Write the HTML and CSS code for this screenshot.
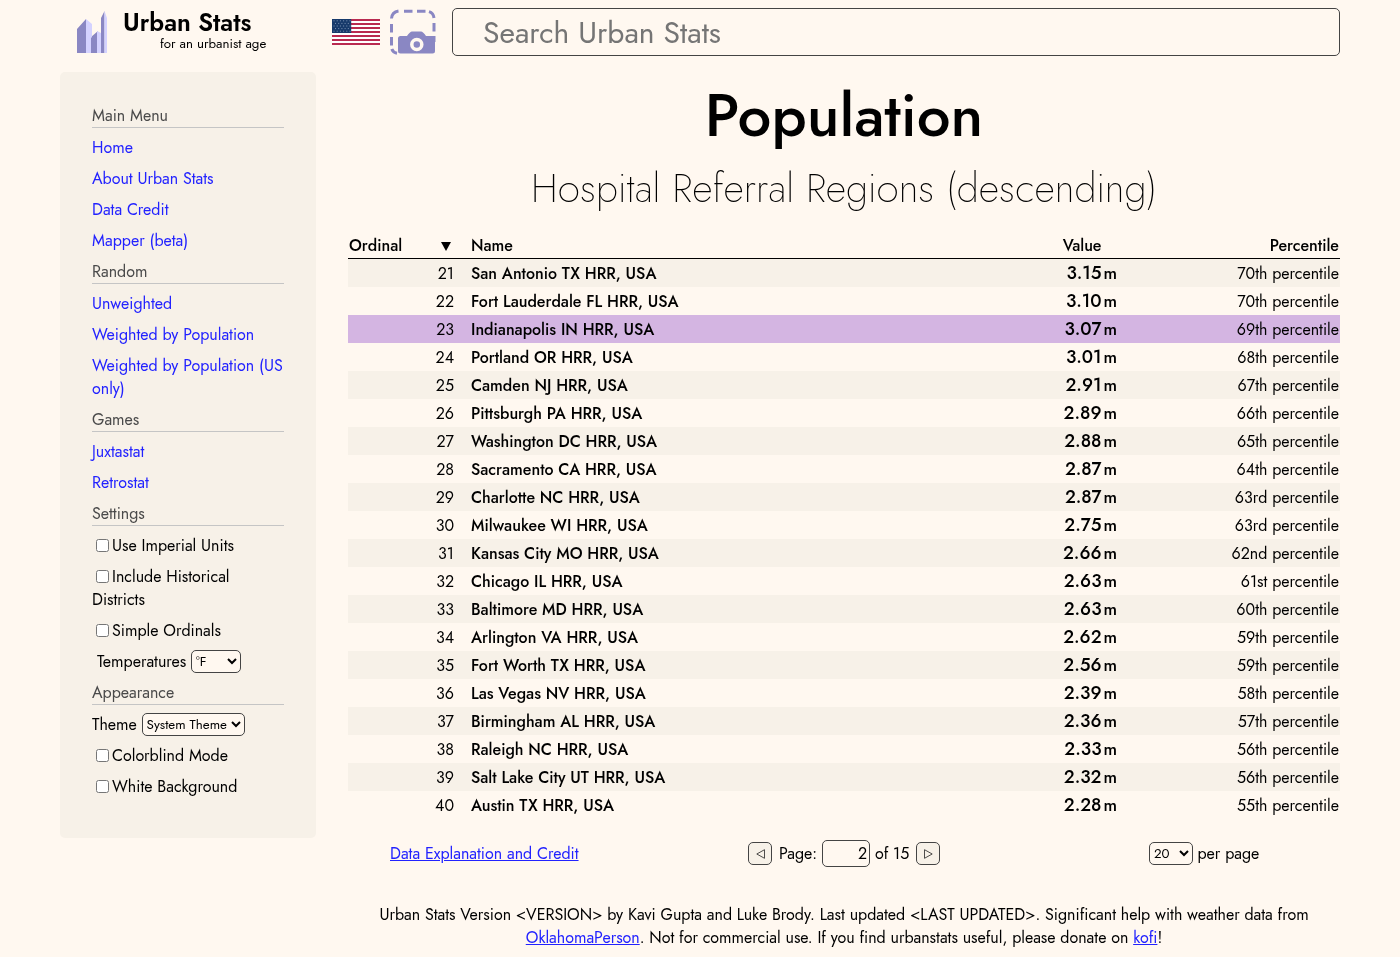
FILE: index.html
```html
<!DOCTYPE html>
<html lang="en">
<head>
<meta charset="utf-8">
<title>Population - Urban Stats</title>
<link rel="stylesheet" href="styles.css">
</head>
<body>
<header class="header">
  <a class="logo">
    <svg class="logo-mark" width="31" height="44" viewBox="0 0 31 44">
      <path fill="#8a87c3" d="M0 19 9 9v34H0zM14 27l7-6v22h-7zM24 8l3.500-7v42h-3.500z"/>
      <path fill="#d4d2ff" d="M9 9l6 5v13l-1 1v15H9zM20 21l4 2v20h-4zM27.500 1 30 8v35h-2.500z"/>
    </svg>
    <span class="logo-text"><span class="logo-name">Urban Stats</span><span class="logo-tag">for an urbanist age</span></span>
  </a>
  <svg class="flag" width="48" height="26" viewBox="0 0 48 26">
    <path fill="#fff" d="M0 0h48v26H0z"/>
    <path stroke="#b92a50" stroke-width="2" d="M0 1h48M0 5h48M0 9h48M0 13h48M0 17h48M0 21h48M0 25h48"/>
    <path fill="#173a6b" d="M0 0h19.200v14H0z"/>
    <path stroke="#7f95b5" stroke-width="1" stroke-dasharray="1 2.200" d="M1.500 1.800h17M3 4.400h15M1.500 7h17M3 9.600h15M1.500 12.200h17"/>
  </svg>
  <svg class="camera" width="46" height="46" viewBox="0 0 46 46">
    <g fill="none" stroke="#8a87c3" stroke-width="3">
      <path d="M1.500 9.500Q2 3 8.500 2M14 2.300h8.500M27 2.300h8.500M39 2.600Q43.500 4 44 9M1.500 15v8.500M1.500 28v8.500M44 14v8.500M44 27v6M1.800 40Q3 43.500 7 44.200"/>
    </g>
    <path fill="#8a87c3" d="M10.500 27H17q3-4.500 5-4.500h9q2 0 5 4.500h9v15q0 2.500-2.500 2.500H10.500q-2.500 0-2.500-2.500V29.500Q8 27 10.500 27z"/>
    <circle cx="26.800" cy="35.500" r="5" fill="none" stroke="#fff8f0" stroke-width="3.500"/>
  </svg>
  <input class="search" placeholder="Search Urban Stats">
</header>
<div class="page">
  <nav class="sidebar">
    <div class="side-title">Main Menu</div>
    <a class="side-item">Home</a>
    <a class="side-item">About Urban Stats</a>
    <a class="side-item">Data Credit</a>
    <a class="side-item">Mapper (beta)</a>
    <div class="side-title">Random</div>
    <a class="side-item">Unweighted</a>
    <a class="side-item">Weighted by Population</a>
    <a class="side-item">Weighted by Population (US only)</a>
    <div class="side-title">Games</div>
    <a class="side-item">Juxtastat</a>
    <a class="side-item">Retrostat</a>
    <div class="side-title">Settings</div>
    <label class="side-item"><input type="checkbox">Use Imperial Units</label>
    <label class="side-item"><input type="checkbox">Include Historical Districts</label>
    <label class="side-item"><input type="checkbox">Simple Ordinals</label>
    <label class="side-item temps">Temperatures <select class="temp-select"><option>°F</option></select></label>
    <div class="side-title">Appearance</div>
    <label class="side-item">Theme <select class="theme-select"><option>System Theme</option></select></label>
    <label class="side-item"><input type="checkbox">Colorblind Mode</label>
    <label class="side-item"><input type="checkbox">White Background</label>
  </nav>
  <main class="content">
    <h1 class="title">Population</h1>
    <h2 class="subtitle">Hospital Referral Regions (descending)</h2>
    <div class="table">
      <div class="row head"><span class="ord"><span>Ordinal</span><svg width="10" height="9" viewBox="0 0 10 9"><path d="M0 0h10L5 9z"/></svg></span><span class="name">Name</span><span class="val">Value</span><span class="unit"></span><span class="pct">Percentile</span></div>
      <div class="row"><span class="ord">21</span><span class="name">San Antonio TX HRR, USA</span><span class="val">3.15</span><span class="unit">m</span><span class="pct">70th percentile</span></div>
      <div class="row"><span class="ord">22</span><span class="name">Fort Lauderdale FL HRR, USA</span><span class="val">3.10</span><span class="unit">m</span><span class="pct">70th percentile</span></div>
      <div class="row selected"><span class="ord">23</span><span class="name">Indianapolis IN HRR, USA</span><span class="val">3.07</span><span class="unit">m</span><span class="pct">69th percentile</span></div>
      <div class="row"><span class="ord">24</span><span class="name">Portland OR HRR, USA</span><span class="val">3.01</span><span class="unit">m</span><span class="pct">68th percentile</span></div>
      <div class="row"><span class="ord">25</span><span class="name">Camden NJ HRR, USA</span><span class="val">2.91</span><span class="unit">m</span><span class="pct">67th percentile</span></div>
      <div class="row"><span class="ord">26</span><span class="name">Pittsburgh PA HRR, USA</span><span class="val">2.89</span><span class="unit">m</span><span class="pct">66th percentile</span></div>
      <div class="row"><span class="ord">27</span><span class="name">Washington DC HRR, USA</span><span class="val">2.88</span><span class="unit">m</span><span class="pct">65th percentile</span></div>
      <div class="row"><span class="ord">28</span><span class="name">Sacramento CA HRR, USA</span><span class="val">2.87</span><span class="unit">m</span><span class="pct">64th percentile</span></div>
      <div class="row"><span class="ord">29</span><span class="name">Charlotte NC HRR, USA</span><span class="val">2.87</span><span class="unit">m</span><span class="pct">63rd percentile</span></div>
      <div class="row"><span class="ord">30</span><span class="name">Milwaukee WI HRR, USA</span><span class="val">2.75</span><span class="unit">m</span><span class="pct">63rd percentile</span></div>
      <div class="row"><span class="ord">31</span><span class="name">Kansas City MO HRR, USA</span><span class="val">2.66</span><span class="unit">m</span><span class="pct">62nd percentile</span></div>
      <div class="row"><span class="ord">32</span><span class="name">Chicago IL HRR, USA</span><span class="val">2.63</span><span class="unit">m</span><span class="pct">61st percentile</span></div>
      <div class="row"><span class="ord">33</span><span class="name">Baltimore MD HRR, USA</span><span class="val">2.63</span><span class="unit">m</span><span class="pct">60th percentile</span></div>
      <div class="row"><span class="ord">34</span><span class="name">Arlington VA HRR, USA</span><span class="val">2.62</span><span class="unit">m</span><span class="pct">59th percentile</span></div>
      <div class="row"><span class="ord">35</span><span class="name">Fort Worth TX HRR, USA</span><span class="val">2.56</span><span class="unit">m</span><span class="pct">59th percentile</span></div>
      <div class="row"><span class="ord">36</span><span class="name">Las Vegas NV HRR, USA</span><span class="val">2.39</span><span class="unit">m</span><span class="pct">58th percentile</span></div>
      <div class="row"><span class="ord">37</span><span class="name">Birmingham AL HRR, USA</span><span class="val">2.36</span><span class="unit">m</span><span class="pct">57th percentile</span></div>
      <div class="row"><span class="ord">38</span><span class="name">Raleigh NC HRR, USA</span><span class="val">2.33</span><span class="unit">m</span><span class="pct">56th percentile</span></div>
      <div class="row"><span class="ord">39</span><span class="name">Salt Lake City UT HRR, USA</span><span class="val">2.32</span><span class="unit">m</span><span class="pct">56th percentile</span></div>
      <div class="row"><span class="ord">40</span><span class="name">Austin TX HRR, USA</span><span class="val">2.28</span><span class="unit">m</span><span class="pct">55th percentile</span></div>
    </div>
    <div class="pager">
      <a class="link explain">Data Explanation and Credit</a>
      <div class="pages">
        <button class="step"><svg width="9" height="10" viewBox="0 0 9 10"><path d="M8.500.7v8.600L.8 5z"/></svg></button>
        <span class="page-label">Page:</span>
        <input class="page-input" value="2">
        <span class="of">of 15</span>
        <button class="step"><svg width="9" height="10" viewBox="0 0 9 10"><path d="M.5.700v8.600L8.200 5z"/></svg></button>
      </div>
      <div class="per"><select class="per-select"><option>20</option></select><span>per page</span></div>
    </div>
    <footer class="footer">
      <div>Urban Stats Version &lt;VERSION&gt; by Kavi Gupta and Luke Brody. Last updated &lt;LAST UPDATED&gt;. Significant help with weather data from</div>
      <div><a class="link">OklahomaPerson</a>. Not for commercial use. If you find urbanstats useful, please donate on <a class="link">kofi</a>!</div>
    </footer>
  </main>
</div>
</body>
</html>
```
FILE: styles.css
```css
* { box-sizing: border-box; }
body {
  margin: 0;
  padding: 8px 60px 0;
  height: 957px;
  overflow: hidden;
  background: #fff8f0;
  color: #000;
  font: 16px/23px Jost, Lato, sans-serif;
}
input, select, button { font-family: inherit; color: #000; }
.header { display: flex; height: 48px; will-change: transform; }
.logo { display: flex; width: 272px; padding: 2px 0 0 17px; }
.logo-text { display: flex; flex-direction: column; padding-left: 15px; width: 160px; white-space: nowrap; }
.logo-name { font-size: 24.7px; font-weight: 600; line-height: 26px; }
.logo-tag { font-size: 13.3px; line-height: 15px; padding-left: 37px; }
.flag { margin-top: 11px; }
.camera { margin: 1px 0 0 9.5px; }
.search {
  flex: 1;
  margin-left: 16.5px;
  height: 48px;
  padding: 0 30px;
  border: 1px solid #444;
  border-radius: 5px;
  background: transparent;
  font-size: 30px;
}
.search::placeholder { color: #757575; opacity: 1; }
.page { display: flex; gap: 32px; margin-top: 16px; align-items: flex-start; will-change: transform; }
.sidebar {
  width: 256px;
  height: 766px;
  padding: 32px;
  border-radius: 5px;
  background: #f7f1e8;
}
.side-title { height: 24px; margin-bottom: 8px; border-bottom: 1px solid #c5c5c5; color: #4a4a4a; }
.side-item { display: block; margin-bottom: 8px; color: #000; }
a.side-item, .link { color: #2222ff; }
.side-item input { width: 13px; height: 13px; margin: 0 3px 0 4px; vertical-align: -1px; }
.side-item.temps { padding-left: 5px; }
select {
  height: 23px;
  padding: 0;
  border: 1px solid #444;
  border-radius: 5px;
  background: #fff8f0;
  font-size: 13.333px;
  vertical-align: top;
}
.temp-select { width: 50px; }
.theme-select { width: 103px; }
.link { text-decoration: underline; }
.content { width: 992px; }
.title { margin: 0; height: 87px; line-height: 88px; font-size: 60px; font-weight: 500; text-align: center; }
.subtitle { margin: 0; height: 73px; line-height: 58px; font-size: 40px; font-weight: 200; text-align: center; white-space: nowrap; }
.row { display: grid; grid-template-columns: 106px 592px 55.5px 33.5px 204px; height: 28px; line-height: 29px; padding-right: 1px; }
.row:nth-child(even) { background: #f7f1e8; }
.row.selected { background: #d4b5e2; }
.row.head { height: 27px; line-height: 27px; border-bottom: 1px solid #000; font-weight: 500; }
.head .ord { display: flex; justify-content: space-between; padding: 0 3px 0 1px; }
.head svg { margin-top: 10px; }
.ord { text-align: right; }
.name { padding-left: 17px; font-weight: 500; }
.val { text-align: right; font-size: 18px; line-height: 28px; font-weight: 500; }
.head .val { font-size: 16px; line-height: 27px; }
.unit { padding-left: 2px; font-size: 17px; font-weight: 500; }
.pct { text-align: right; }
.pager { display: grid; grid-template-columns: 400px 401px 191px; height: 27px; margin-top: 21px; align-items: center; }
.explain { padding-left: 42px; }
.pages { display: flex; align-items: center; }
.step { width: 24px; height: 23px; padding: 0; border: 1px solid #444; border-radius: 5px; background: #f7f1e8; display: grid; place-items: center; }
.step path { fill: none; stroke: #222; stroke-width: .8; }
.page-label { width: 43px; margin-left: 7px; }
.page-input { width: 48px; height: 27px; border: 1px solid #444; border-radius: 5px; background: transparent; font-size: 16px; text-align: right; padding: 0 2px; }
.of { width: 41px; margin-left: 5px; }
.per { display: flex; gap: 4.5px; }
.per-select { width: 44px; }
.footer { margin-top: 36px; text-align: center; white-space: nowrap; }
```
